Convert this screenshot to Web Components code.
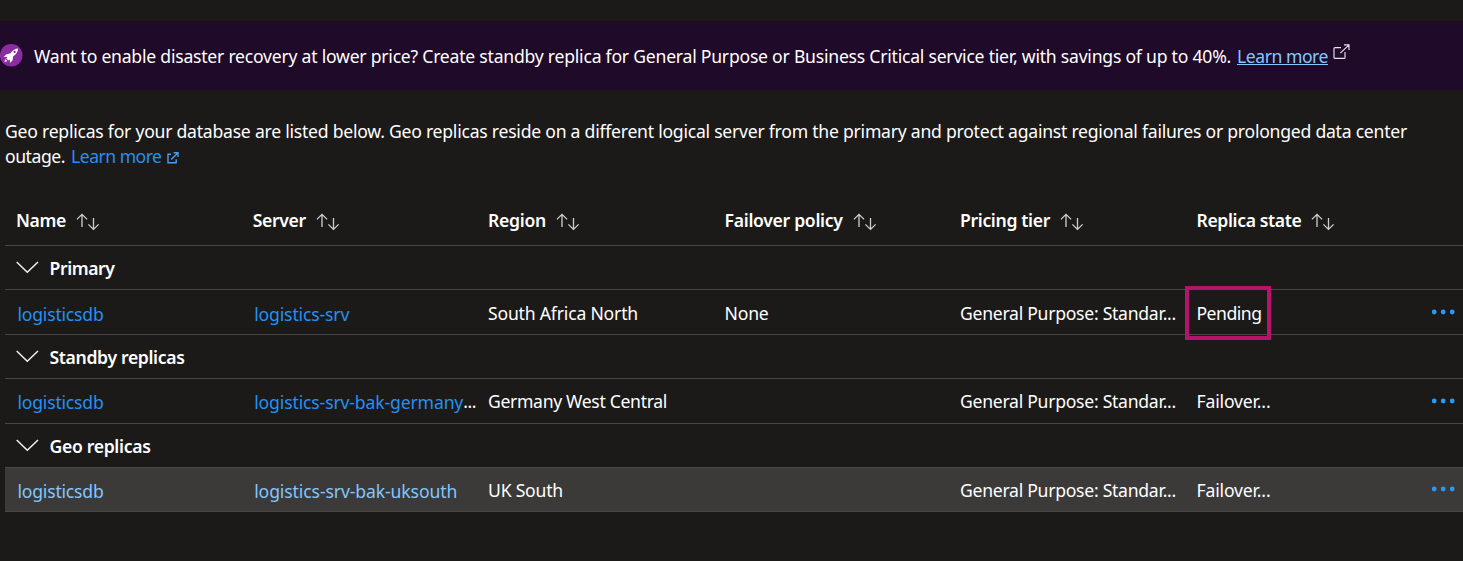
<!DOCTYPE html>
<html lang="en"><head><meta charset="utf-8"><title>Geo replicas</title>
<style>
html,body{margin:0;background:#1b1a19}
body{height:561px;overflow:hidden;font:17.6px/25px "Noto Sans","Open Sans",sans-serif;color:#fff}
</style></head><body>
<replica-page></replica-page>
<script>
const define=(name,html,setup)=>customElements.define(name,class extends HTMLElement{
  connectedCallback(){
    if(this.shadowRoot)return;
    const t=document.createElement('template');
    t.innerHTML=html;
    this.attachShadow({mode:'open'}).append(t.content.cloneNode(true));
    if(setup)setup(this,this.shadowRoot);
  }
});

/* Text run whose tracking is set so that it spans the width in its "w" attribute. */
define('ui-text','<style>:host{display:inline-block;white-space:pre}</style><span><slot></slot></span>',(el)=>{
  const w=parseFloat(el.getAttribute('w'));
  if(!w)return;
  const cs=getComputedStyle(el);
  const ctx=document.createElement('canvas').getContext('2d');
  ctx.font=`${cs.fontWeight} ${cs.fontSize} ${cs.fontFamily}`;
  const s=el.textContent;
  el.style.letterSpacing=((w-ctx.measureText(s).width)/s.length).toFixed(4)+'px';
});

define('ui-link',`<style>
:host{display:inline-block;color:var(--link,#2490f5)}
:host([underlined]) a{text-decoration:underline;text-decoration-thickness:1px;text-underline-offset:1px;text-decoration-skip-ink:none}
:host([underlined]) a{background:linear-gradient(currentColor,currentColor) 0 20px/100% 1px no-repeat;text-decoration:none}
a{color:inherit;text-decoration:none;display:block}
</style><a href="#"><slot></slot></a>`);

define('rocket-badge',`<style>:host{display:block;width:23px;height:23px}svg{display:block}</style>
<svg width="23" height="23" viewBox="0 0 23 23"><circle cx="11.2" cy="11.3" r="11.3" fill="#8a2da5"/>
<path d="M18 4.4c-2.7.1-5 1.5-7.2 4.4l-.6.8-3.8.7-2.6 2.8 3.4-.2-.9 1.6 2 2 1.6-.9.1 3.3 2.6-2.7.5-3.7.8-.7c2.8-2.2 4.1-4.5 4.1-7.4z" fill="#fff"/><circle cx="14.6" cy="7.9" r="1.15" fill="#8a2da5"/><path d="M5.2 15.1l2.1 2.1-2.8.8z" fill="#fff"/></svg>`);

define('popout-icon',`<style>:host{display:block;width:17px;height:16px}svg{display:block}</style>
<svg width="17" height="16" viewBox="0 0 17 16" fill="none" stroke="#e6e0ec" stroke-width="1.15"><path d="M8 3.6H2A1 1 0 0 0 1 4.6v8.8a1 1 0 0 0 1 1h9a1 1 0 0 0 1-1V8M11 .9h5v5M16 .9L7.3 9.2"/></svg>`);

define('external-icon',`<style>:host{display:block;width:12px;height:12px}svg{display:block}</style>
<svg width="12" height="12" viewBox="0 0 12 12" fill="none" stroke="#4b9bf3" stroke-width="1.4"><path d="M4 2.2H1v8.6h8.2V7.2M6.6.8h4.4v4.3M10.8 1L4.2 7.6"/></svg>`);

define('sort-icon',`<style>:host{display:block;width:24px;height:18px}svg{display:block}</style>
<svg width="24" height="18" viewBox="0 0 24 18" fill="none" stroke="#d0cfce" stroke-width="1.3"><path d="M6 14V1.4M.9 6.4L6 1.3l5.1 5.1M17.5 5v11.3M12.4 11.4l5.1 5 5.1-5"/></svg>`);

define('promo-banner',`<style>
:host{display:flex;align-items:flex-start;height:69px;margin-top:21px;background:#200a29;box-sizing:border-box;padding-top:23px;--link:#82c7ff}
.msg{margin:0 6px 0 11px}popout-icon{margin-left:5px}
</style><rocket-badge></rocket-badge><ui-text class="msg" w="1197">Want to enable disaster recovery at lower price? Create standby replica for General Purpose or Business Critical service tier, with savings of up to 40%.</ui-text><ui-link underlined><ui-text w="91">Learn more</ui-text></ui-link><popout-icon></popout-icon>`);

define('intro-text',`<style>
:host{display:block;padding:29px 0 0 5px;height:108px;box-sizing:border-box}
div{display:flex;height:25px}external-icon{margin:8px 0 0 5px}
</style><div><ui-text w="1402">Geo replicas for your database are listed below. Geo replicas reside on a different logical server from the primary and protect against regional failures or prolonged data center</ui-text></div>
<div><ui-text w="60">outage.</ui-text><ui-link style="margin-left:6px"><ui-text w="90.5">Learn more</ui-text></ui-link><external-icon></external-icon></div>`);

define('header-cell',`<style>:host{display:flex;font-weight:600}sort-icon{margin:5px 0 0 10px}</style><slot></slot><sort-icon></sort-icon>`);

define('grid-row',`<style>
:host{display:grid;grid-template-columns:236.7px 235.3px 236.6px 235.4px 236.5px 1fr;padding-left:11px;box-sizing:border-box;border-bottom:1px solid #484644;height:var(--h,45px);padding-top:var(--pt,11px)}
:host([hot]){background:#3b3a39;--link:#82c7ff}
</style><slot></slot>`);

define('group-row',`<style>
:host{display:flex;box-sizing:border-box;height:44px;border-bottom:1px solid #484644;padding:10px 0 0 11px;font-weight:600}
svg{display:block;margin:5px 10.5px 0 0}
</style><svg width="23" height="14" viewBox="0 0 23 14" fill="none" stroke="#f3f2f1" stroke-width="1.5"><path d="M.7 1L11.3 11.3 22 1"/></svg><slot></slot>`);

define('state-cell',`<style>
:host{display:flex;justify-content:space-between;position:relative}
.dots{display:block;margin-top:var(--dots,7px)}
.mark{display:none}
:host([marked]) .mark{display:block;position:absolute;left:-11px;top:-15px;width:86px;height:54px;border:4px solid #b4146a;box-sizing:border-box}
</style><slot></slot><svg class="dots" width="32" height="8" viewBox="0 0 32 8" fill="#2899f5"><circle cx="3.2" cy="4" r="2.4"/><circle cx="12.2" cy="4" r="2.4"/><circle cx="21.2" cy="4" r="2.4"/></svg><span class="mark"></span>`);

define('replica-table',`<style>
:host{display:block;margin-left:5px}
.head{--h:48px;--pt:10px}
.up{--pt:10px;--dots:8px}
ui-link{margin:1px 0 0 1.5px}
.server{display:flex}
</style>
<grid-row class="head">
<header-cell><ui-text w="50">Name</ui-text></header-cell><header-cell><ui-text w="53">Server</ui-text></header-cell><header-cell><ui-text w="58">Region</ui-text></header-cell><header-cell><ui-text w="118">Failover policy</ui-text></header-cell><header-cell><ui-text w="90">Pricing tier</ui-text></header-cell><header-cell><ui-text w="105">Replica state</ui-text></header-cell></grid-row>
<group-row><ui-text w="65">Primary</ui-text></group-row>
<grid-row><ui-link><ui-text w="86">logisticsdb</ui-text></ui-link><ui-link><ui-text w="95">logistics-srv</ui-text></ui-link><ui-text w="150">South Africa North</ui-text><ui-text w="44">None</ui-text><ui-text w="216">General Purpose: Standar...</ui-text><state-cell marked><ui-text w="65">Pending</ui-text></state-cell></grid-row>
<group-row><ui-text w="135">Standby replicas</ui-text></group-row>
<grid-row class="up"><ui-link><ui-text w="86">logisticsdb</ui-text></ui-link><span class="server"><ui-link><ui-text w="209">logistics-srv-bak-germany</ui-text></ui-link><ui-text w="13">...</ui-text></span><ui-text w="179">Germany West Central</ui-text><span></span><ui-text w="216">General Purpose: Standar...</ui-text><state-cell><ui-text w="74">Failover...</ui-text></state-cell></grid-row>
<group-row><ui-text w="101">Geo replicas</ui-text></group-row>
<grid-row class="up" hot style="--h:44px;--dots:7px"><ui-link><ui-text w="86">logisticsdb</ui-text></ui-link><ui-link><ui-text w="203">logistics-srv-bak-uksouth</ui-text></ui-link><ui-text w="75">UK South</ui-text><span></span><ui-text w="216">General Purpose: Standar...</ui-text><state-cell><ui-text w="74">Failover...</ui-text></state-cell></grid-row>`);

define('replica-page',`<style>:host{display:flow-root}</style><promo-banner></promo-banner><intro-text></intro-text><replica-table></replica-table>`);
</script></body></html>
